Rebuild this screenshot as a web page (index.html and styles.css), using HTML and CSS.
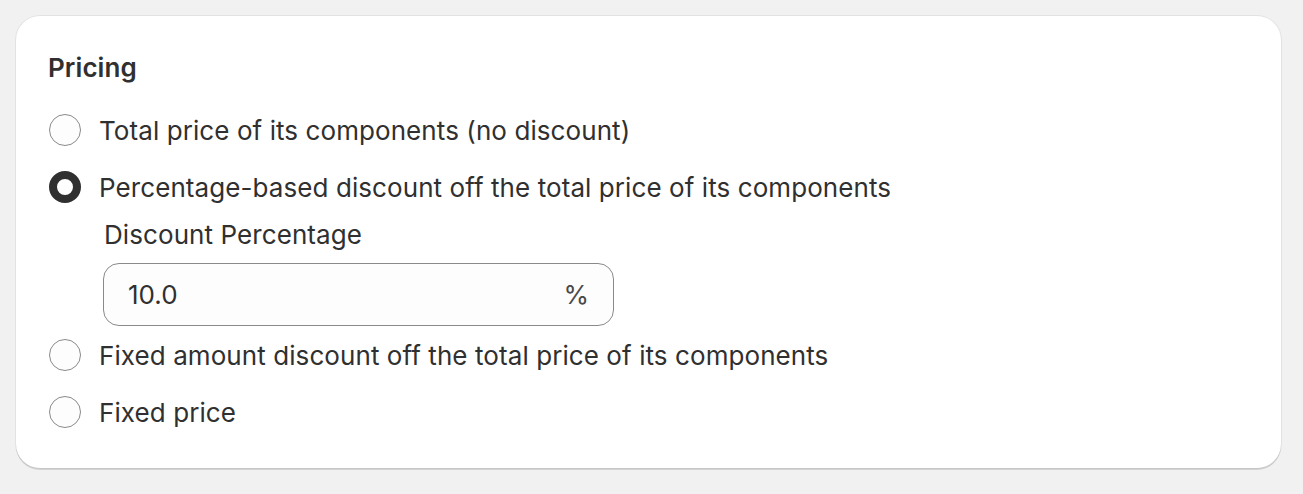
FILE: index.html
```html
<!DOCTYPE html>
<html lang="en">
<head>
    <meta charset="UTF-8">
    <meta name="viewport" content="width=device-width, initial-scale=1.0">
    <title>Pricing</title>
    <link rel="stylesheet" href="styles.css">
</head>
<body>
    <div class="card">
        <h2 class="card-title">Pricing</h2>

        <div class="choice-list">
            <label class="choice">
                <input type="radio" name="pricing" value="total">
                <span class="radio"></span>
                <span class="choice-label">Total price of its components (no discount)</span>
            </label>

            <div class="choice-group">
                <label class="choice">
                    <input type="radio" name="pricing" value="percentage" checked>
                    <span class="radio"></span>
                    <span class="choice-label">Percentage-based discount off the total price of its components</span>
                </label>
                <div class="choice-children">
                    <label class="field-label" for="discount">Discount Percentage</label>
                    <div class="text-field">
                        <input id="discount" type="text" value="10.0">
                        <span class="suffix">%</span>
                    </div>
                </div>
            </div>

            <label class="choice">
                <input type="radio" name="pricing" value="fixed-amount">
                <span class="radio"></span>
                <span class="choice-label">Fixed amount discount off the total price of its components</span>
            </label>

            <label class="choice">
                <input type="radio" name="pricing" value="fixed-price">
                <span class="radio"></span>
                <span class="choice-label">Fixed price</span>
            </label>
        </div>
    </div>
</body>
</html>
```

FILE: styles.css
```css
body {
    font-family: 'Inter', 'Liberation Sans', sans-serif;
    background-color: #f1f1f1;
    color: #303030;
    margin: 0;
    padding: 16px 22px 16px 16px;
    letter-spacing: 0.08px;
}

.card {
    background: white;
    border-radius: 24px;
    padding: 32px 32px 36px;
    box-shadow: 0 2px 0 0 rgba(0, 0, 0, 0.12), 0 0 0 1px rgba(0, 0, 0, 0.06);
}

.card-title {
    margin: 0 0 22px;
    font-size: 26px;
    line-height: 40px;
    font-weight: 600;
}

.choice-list {
    display: flex;
    flex-direction: column;
    gap: 17px;
}

.choice {
    display: flex;
    align-items: center;
    gap: 18px;
    height: 40px;
    font-size: 26px;
    cursor: pointer;
}

.choice input {
    display: none;
}

.radio {
    width: 32px;
    height: 32px;
    box-sizing: border-box;
    border-radius: 50%;
    border: 1.5px solid #8a8a8a;
    background: #fdfdfd;
    margin-left: 1px;
    flex-shrink: 0;
}

.choice input:checked + .radio {
    border: 8px solid #303030;
    background: white;
}

.choice-group {
    margin-bottom: -8px;
}

.choice-children {
    padding: 8px 0 0 55px;
    display: flex;
    flex-direction: column;
    gap: 8px;
}

.field-label {
    font-size: 26px;
    line-height: 40px;
    padding-left: 1px;
}

.text-field {
    width: 511px;
    height: 63px;
    box-sizing: border-box;
    display: flex;
    align-items: center;
    border: 1.5px solid #8a8a8a;
    border-radius: 16px;
    background: #fdfdfd;
    padding: 0 24px;
}

.text-field input {
    flex: 1;
    border: none;
    background: transparent;
    font: inherit;
    font-size: 26px;
    color: #303030;
    padding: 0;
    outline: none;
}

.suffix {
    font-size: 26px;
    color: #4a4a4a;
}
```
